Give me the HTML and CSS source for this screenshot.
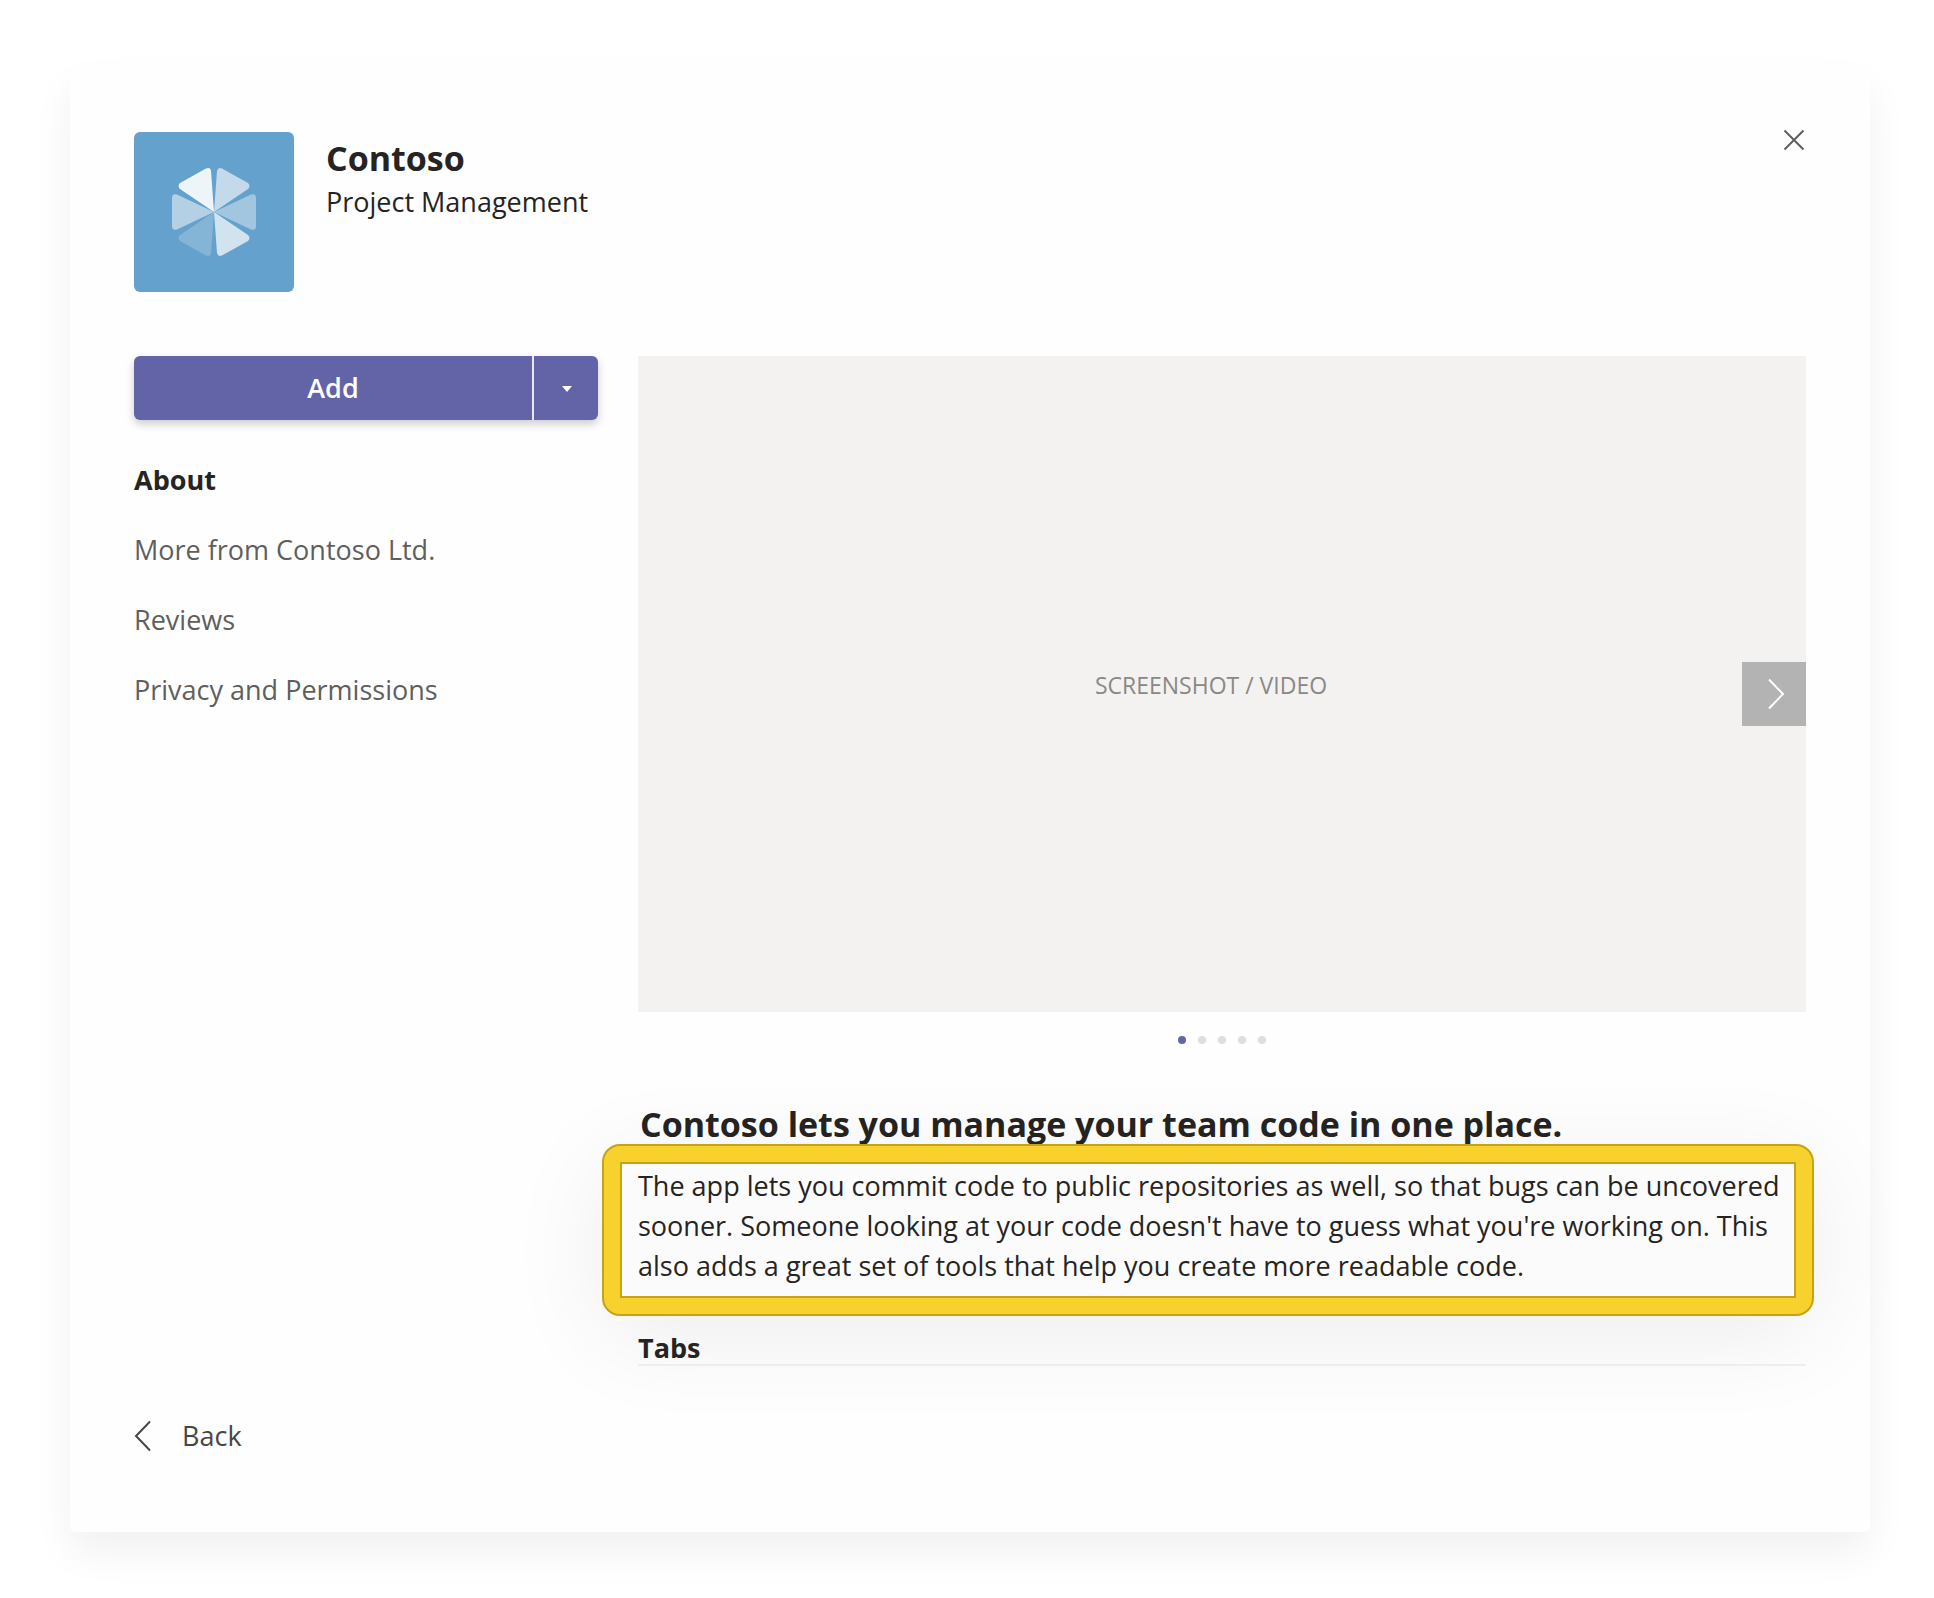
FILE: index.html
```html
<!DOCTYPE html>
<html lang="en">
<head>
<meta charset="utf-8">
<meta name="viewport" content="width=device-width, initial-scale=1">
<title>Contoso</title>
<link rel="stylesheet" href="styles.css">
</head>
<body>
<main class="dialog">
  <header class="header">
    <svg class="logo" viewBox="0 0 160 160" aria-hidden="true">
      <rect width="160" height="160" rx="6" fill="#64a1cc"/>
      <g stroke-linejoin="round">
        <path fill="#eef5f9" d="M80 80 46 57Q43 54 46 51L72 36.500Q76.500 35 77 39Z"/>
        <path fill="#c4daea" d="M80 80 83 39Q84 35 88 36.500L114 51Q117 54 114 57Z"/>
        <path fill="#a3c6e0" d="M80 80 117 62.500Q122 61 122 66V94Q122 99 117 97.500Z"/>
        <path fill="#d1e3ef" d="M80 80 114 103Q117 106 114 109L88 123.500Q84 125 83 121Z"/>
        <path fill="#84b4d6" d="M80 80 77 121Q76.500 125 72 123.500L46 109Q43 106 46 103Z"/>
        <path fill="#b3d0e5" d="M80 80 43 62.500Q38 61 38 66V94Q38 99 43 97.500Z"/>
      </g>
    </svg>
    <div class="titles">
      <h1 class="title">Contoso</h1>
      <p class="subtitle">Project Management</p>
    </div>
    <button class="close" type="button" aria-label="Close">
      <svg width="24" height="24" viewBox="0 0 24 24" fill="none" stroke="#605e5c" stroke-width="2"><path d="M2.500 2.500l19 19M21.500 2.500l-19 19"/></svg>
    </button>
  </header>

  <div class="body">
    <aside class="sidebar">
      <div class="split">
        <button class="split-main" type="button">Add</button>
        <button class="split-menu" type="button" aria-label="More add options">
          <svg width="10" height="6" viewBox="0 0 10 6" fill="#fff"><path d="M0 0h10L5 6z"/></svg>
        </button>
      </div>
      <nav class="nav">
        <a class="nav-link nav-link-active" href="#about">About</a>
        <a class="nav-link" href="#more">More from Contoso Ltd.</a>
        <a class="nav-link" href="#reviews">Reviews</a>
        <a class="nav-link" href="#privacy">Privacy and Permissions</a>
      </nav>
    </aside>

    <section class="content" id="about">
      <div class="gallery">
        <span class="gallery-label">SCREENSHOT / VIDEO</span>
        <button class="next" type="button" aria-label="Next">
          <svg width="18" height="32" viewBox="0 0 18 32" fill="none" stroke="#fff" stroke-width="2"><path d="M2 1.500 16 16 2 30.500"/></svg>
        </button>
      </div>
      <div class="dots">
        <span class="dot dot-active"></span><span class="dot"></span><span class="dot"></span><span class="dot"></span><span class="dot"></span>
      </div>
      <h2 class="headline">Contoso lets you manage your team code in one place.</h2>
      <div class="callout">
        <p class="callout-text">The app lets you commit code to public repositories as well, so that bugs can be uncovered sooner. Someone looking at your code doesn't have to guess what you're working on. This also adds a great set of tools that help you create more readable code.</p>
      </div>
      <h3 class="tabs">Tabs</h3>
    </section>
  </div>

  <footer class="footer">
    <button class="back" type="button">
      <svg width="18" height="32" viewBox="0 0 18 32" fill="none" stroke="#484644" stroke-width="2"><path d="M16 1.500 2 16 16 30.500"/></svg>
      Back
    </button>
  </footer>
</main>
</body>
</html>
```
FILE: styles.css
```css
* { box-sizing: border-box; }

body {
  margin: 0;
  padding: 68px 64px 66px 70px;
  background: #fff;
  color: #252423;
  font-family: "Open Sans", "Noto Sans", sans-serif;
  font-size: 27px;
  line-height: 40px;
}

h1, h2, h3, p { margin: 0; }

button {
  padding: 0;
  border: 0;
  background: none;
  color: inherit;
  font: inherit;
  cursor: pointer;
}

svg { display: block; }

.dialog {
  padding: 64px 64px 76px;
  border-radius: 6px;
  background: #fefefe;
  box-shadow: 0 20px 40px rgba(0, 0, 0, 0.06);
}

.header {
  display: flex;
  gap: 32px;
  align-items: flex-start;
}

.logo { width: 160px; height: 160px; }

.titles { flex: 1; padding-top: 2px; }

.title { font-size: 34px; line-height: 48px; }

.close { padding: 0; margin-top: -4px; }

.body {
  display: grid;
  grid-template-columns: 464px minmax(0, 1fr);
  gap: 40px;
  margin-top: 64px;
}

.split {
  display: flex;
  gap: 2px;
  height: 64px;
  border-radius: 6px;
  background: #e8e8f2;
  box-shadow: 0 4px 8px rgba(0, 0, 0, 0.2);
  overflow: hidden;
}

.split-main,
.split-menu {
  background: #6264a7;
  color: #fff;
  font-weight: 600;
}

.split-main { flex: 1; }

.split-menu {
  display: grid;
  place-items: center;
  width: 64px;
  padding: 2px 0 0 2px;
}

.nav {
  display: flex;
  flex-direction: column;
  gap: 30px;
  margin-top: 40px;
}

.nav-link { color: #605e5c; text-decoration: none; }

.nav-link-active { color: #252423; font-weight: 700; }

.gallery {
  display: grid;
  place-items: center;
  position: relative;
  aspect-ratio: 1168 / 656;
  padding: 2px 22px 0 0;
  background: #f3f2f1;
}

.gallery-label { color: #8a8886; font-size: 23px; }

.next {
  position: absolute;
  right: 0;
  bottom: 286px;
  display: grid;
  place-items: center;
  width: 64px;
  height: 64px;
  padding-left: 4px;
  background: #b3b3b3;
}

.dots {
  display: flex;
  gap: 12px;
  justify-content: center;
  padding: 24px 0;
}

.dot {
  width: 8px;
  height: 8px;
  border-radius: 50%;
  background: #dedede;
}

.dot-active { background: #6264a7; }

.headline {
  margin-top: 32px;
  padding-left: 2px;
  font-size: 34px;
  line-height: 48px;
  white-space: nowrap;
}

.callout {
  position: relative;
  margin: -4px -8px 0 -36px;
  padding: 16px;
  border: 2px solid #c4a316;
  border-radius: 18px;
  background: #f8d22c;
  box-shadow: 0 20px 100px rgba(0, 0, 0, 0.07);
}

.callout-text {
  padding: 2px 8px 10px 16px;
  border: 2px solid #c4a316;
  background: #fbfbfb;
}

.tabs {
  position: relative;
  margin-top: 16px;
  border-bottom: 2px solid #eee;
  font-size: 27px;
  line-height: 32px;
}

.footer { margin-top: 50px; }

.back {
  display: flex;
  gap: 30px;
  align-items: center;
  color: #484644;
}
```
